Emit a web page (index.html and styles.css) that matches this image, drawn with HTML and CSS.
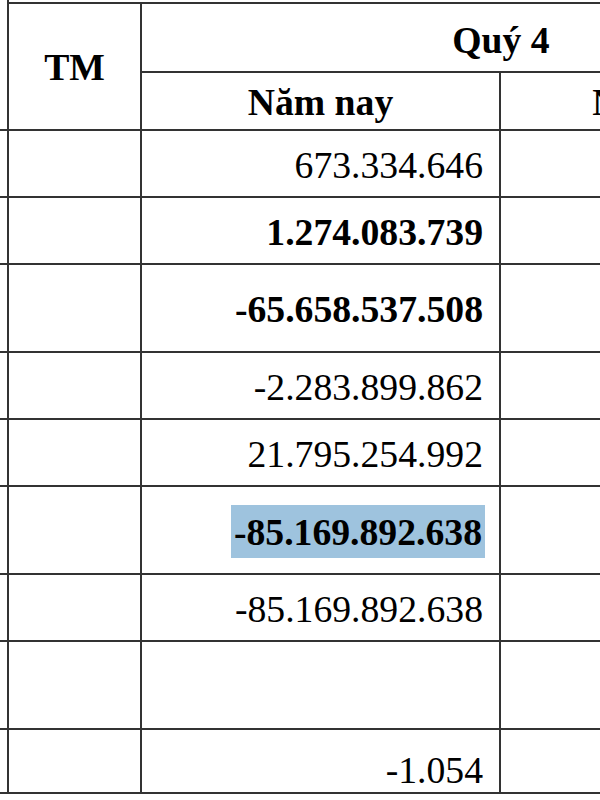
FILE: index.html
```html
<!DOCTYPE html>
<html lang="vi">
<head>
<meta charset="utf-8">
<title>Quý 4</title>
<link rel="stylesheet" href="styles.css">
</head>
<body>
<div class="viewport">
  <div class="sheet">
    <div class="cell lead head-lead"></div>
    <div class="cell tm head-top">TM</div>
    <div class="cell quarter head-top">Quý 4</div>
    <div class="cell sub">Năm nay</div>
    <div class="cell sub">Năm trước</div>

    <div class="cell lead"></div><div class="cell"></div><div class="cell num">673.334.646</div><div class="cell"></div>
    <div class="cell lead"></div><div class="cell"></div><div class="cell num bold">1.274.083.739</div><div class="cell"></div>
    <div class="cell lead"></div><div class="cell"></div><div class="cell num bold">-65.658.537.508</div><div class="cell"></div>
    <div class="cell lead"></div><div class="cell"></div><div class="cell num">-2.283.899.862</div><div class="cell"></div>
    <div class="cell lead"></div><div class="cell"></div><div class="cell num">21.795.254.992</div><div class="cell"></div>
    <div class="cell lead"></div><div class="cell"></div><div class="cell num bold hl-cell"><span class="hl">-85.169.892.638</span></div><div class="cell"></div>
    <div class="cell lead"></div><div class="cell"></div><div class="cell num">-85.169.892.638</div><div class="cell"></div>
    <div class="cell lead"></div><div class="cell"></div><div class="cell num"></div><div class="cell"></div>
    <div class="cell lead"></div><div class="cell"></div><div class="cell num bottom">-1.054</div><div class="cell"></div>
  </div>
</div>
</body>
</html>
```

FILE: styles.css
```css
html, body {
  margin: 0;
  padding: 0;
  background: #ffffff;
  overflow: hidden;
}

.viewport {
  width: 600px;
  height: 800px;
  overflow: hidden;
}

.sheet {
  display: grid;
  width: 862px;
  grid-template-columns: 9px 133px 359px 361px;
  grid-template-rows: 73px 58px 67px 67px 88px 67px 67px 88px 67px 88px 64px;
  font-family: "Liberation Serif", "Times New Roman", serif;
  font-size: 37.7px;
  color: #000;
}

.cell {
  box-sizing: border-box;
  border-right: 2px solid #333;
  border-bottom: 2px solid #333;
  display: flex;
  align-items: center;
  min-width: 0;
  white-space: nowrap;
}

.head-lead {
  grid-row: 1 / span 2;
}

.head-top {
  margin-top: 2px;
  border-top: 2px solid #333;
}

.tm {
  grid-row: 1 / span 2;
  justify-content: center;
  font-weight: bold;
}

.quarter {
  grid-column: 3 / span 2;
  justify-content: center;
  font-weight: bold;
  padding-top: 4px;
}

.sub {
  justify-content: center;
  font-weight: bold;
  padding-top: 2px;
}

.num {
  justify-content: flex-end;
  padding-right: 16px;
  padding-top: 2px;
}

.bold {
  font-weight: bold;
}

.bottom {
  align-items: flex-end;
  padding-bottom: 0;
}

.hl-cell {
  padding-right: 14px;
}

.hl {
  background: #9ec3de;
  padding: 5px 3px 4px 3px;
}
```
